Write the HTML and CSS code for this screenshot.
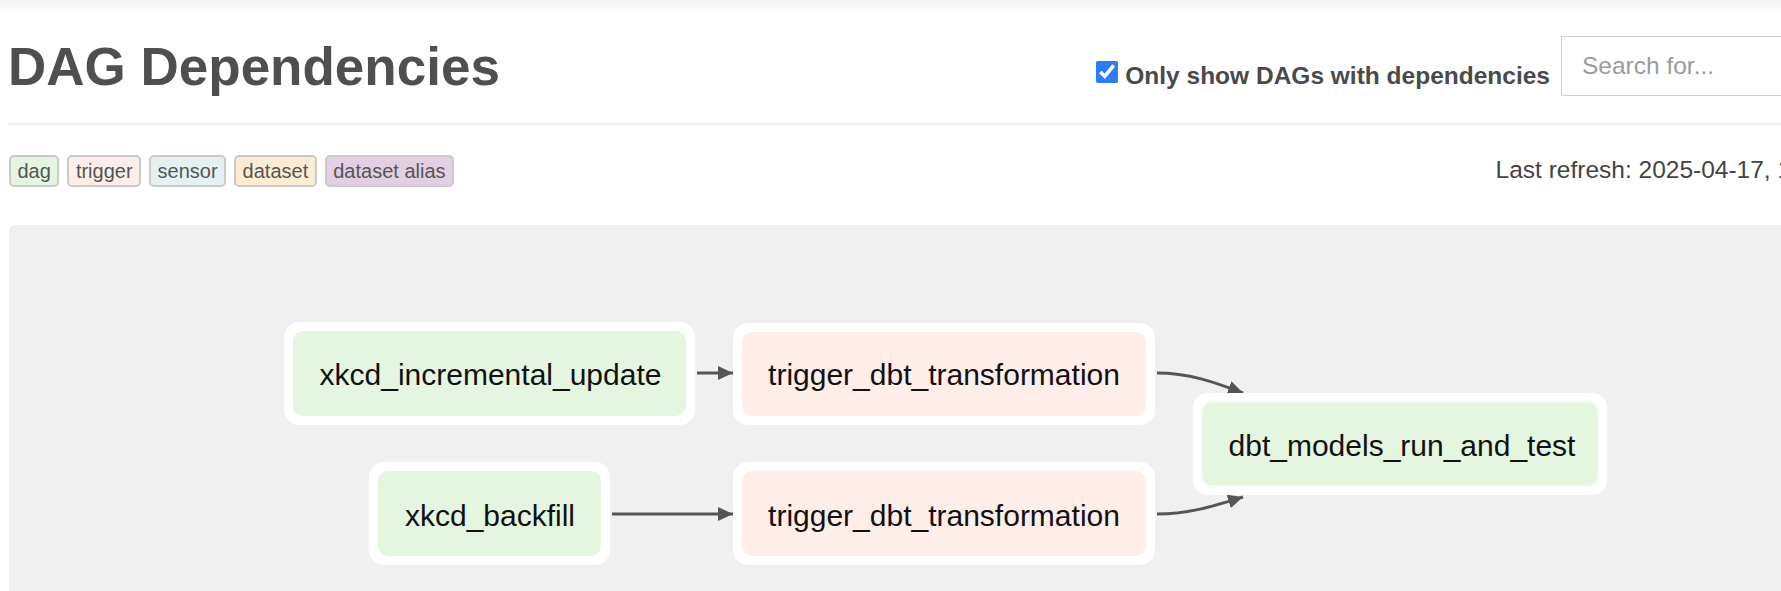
FILE: index.html
```html
<!DOCTYPE html>
<html lang="en">
<head>
<meta charset="utf-8">
<title>DAG Dependencies</title>
<link rel="stylesheet" href="styles.css">
</head>
<body>
<div class="topshade"></div>
<div class="page">
  <header class="header">
    <h1 class="title">DAG Dependencies</h1>
    <div class="controls">
      <label class="only"><input class="only-box" type="checkbox" checked><span>Only show DAGs with dependencies</span></label>
      <input class="search" type="text" placeholder="Search for...">
    </div>
  </header>
  <hr class="divider">
  <div class="legend-row">
    <div class="legend">
      <span class="legend-item dag">dag</span>
      <span class="legend-item trigger">trigger</span>
      <span class="legend-item sensor">sensor</span>
      <span class="legend-item dataset">dataset</span>
      <span class="legend-item alias">dataset alias</span>
    </div>
    <div class="refresh">Last refresh: 2025-04-17, 10:52:46 UTC</div>
  </div>
  <div class="graph">
    <svg class="graph-svg" width="1921" height="420" viewBox="0 0 1921 420">
      <defs>
        <marker id="arrow" markerUnits="userSpaceOnUse" markerWidth="16" markerHeight="14" refX="15" refY="7" orient="auto">
          <path d="M0,0 L15,7 L0,14 z" fill="#555"/>
        </marker>
      </defs>
      <g class="edges">
        <path d="M688,148 L724,148" marker-end="url(#arrow)"/>
        <path d="M603,289 L724,289" marker-end="url(#arrow)"/>
        <path d="M1148,148 C1180,148 1205,157 1234,168" marker-end="url(#arrow)"/>
        <path d="M1148,289 C1180,289 1205,281 1234,272" marker-end="url(#arrow)"/>
      </g>
      <g class="node">
        <rect class="node-outer" x="275" y="97" width="411" height="103" rx="15"/>
        <rect class="node-inner dag-fill" x="284" y="106" width="393" height="85" rx="10"/>
        <text x="481.5" y="160">xkcd_incremental_update</text>
      </g>
      <g class="node">
        <rect class="node-outer" x="724" y="98" width="422" height="102" rx="15"/>
        <rect class="node-inner trigger-fill" x="733" y="107" width="404" height="84" rx="10"/>
        <text x="935" y="160">trigger_dbt_transformation</text>
      </g>
      <g class="node">
        <rect class="node-outer" x="360" y="237" width="241" height="103" rx="15"/>
        <rect class="node-inner dag-fill" x="369" y="246" width="223" height="85" rx="10"/>
        <text x="481" y="301">xkcd_backfill</text>
      </g>
      <g class="node">
        <rect class="node-outer" x="724" y="237" width="422" height="103" rx="15"/>
        <rect class="node-inner trigger-fill" x="733" y="246" width="404" height="85" rx="10"/>
        <text x="935" y="301">trigger_dbt_transformation</text>
      </g>
      <g class="node">
        <rect class="node-outer" x="1184" y="168" width="414" height="102" rx="15"/>
        <rect class="node-inner dag-fill" x="1193" y="177" width="396" height="84" rx="10"/>
        <text x="1393" y="231">dbt_models_run_and_test</text>
      </g>
    </svg>
  </div>
</div>
</body>
</html>
```

FILE: styles.css
```css
html, body {
  margin: 0;
  padding: 0;
  background: #ffffff;
  overflow: hidden;
}

body {
  font-family: "Liberation Sans", Arial, Helvetica, sans-serif;
  color: #4d4d4d;
}

.topshade {
  height: 14px;
  background: linear-gradient(#f3f3f3, #ffffff);
}

.page {
  width: 1921px;
  padding-left: 9px;
}

.header {
  display: flex;
  justify-content: space-between;
  align-items: flex-start;
  margin-top: 22px;
}

.title {
  margin: 0 0 0 -1px;
  font-size: 53px;
  line-height: 61px;
  font-weight: bold;
  color: #4f4f4f;
}

.controls {
  display: flex;
  align-items: flex-start;
  gap: 11px;
}

.only {
  display: flex;
  align-items: flex-start;
  margin-top: 22px;
  font-size: 24.5px;
  line-height: 35px;
  font-weight: bold;
  color: #4a4a4a;
  white-space: nowrap;
}

.only-box {
  width: 22px;
  height: 22px;
  margin: 3px 7px 0 0;
  accent-color: #2b7cf6;
}

.search {
  box-sizing: border-box;
  width: 369px;
  height: 60px;
  border: 1px solid #d2d2d2;
  padding: 0 20px;
  font-family: "Liberation Sans", Arial, sans-serif;
  font-size: 24.5px;
  color: #555;
  background: #fff;
  outline: none;
}

.search::placeholder {
  color: #9b9b9b;
}

.divider {
  margin: 26px 0 0 -1px;
  height: 2px;
  border: 0;
  background: #ededed;
}

.legend-row {
  display: flex;
  justify-content: space-between;
  align-items: baseline;
  margin-top: 30px;
}

.legend {
  display: flex;
  gap: 8px;
}

.legend-item {
  font-size: 20px;
  line-height: 24px;
  padding: 2px 6.5px;
  border: 2px solid #cacaca;
  border-radius: 5px;
  color: #555;
}

.legend-item.dag { background: #e6f5e2; }
.legend-item.trigger { background: #fdeeea; }
.legend-item.sensor { background: #e5f1f1; }
.legend-item.dataset { background: #fcecd4; }
.legend-item.alias { background: #e3cfe4; }

.refresh {
  font-size: 24.5px;
  color: #444;
  white-space: nowrap;
}

.graph {
  margin-top: 38px;
  height: 420px;
  background: #f0f0f0;
  border-radius: 6px;
  overflow: hidden;
}

.graph-svg {
  display: block;
}

.edges path {
  fill: none;
  stroke: #555;
  stroke-width: 3;
}

.node-outer {
  fill: #ffffff;
}

.dag-fill {
  fill: #e4f6e0;
}

.trigger-fill {
  fill: #feede9;
}

.node text {
  font-family: "Liberation Sans", Arial, sans-serif;
  font-size: 30px;
  fill: #111;
  text-anchor: middle;
}
```
